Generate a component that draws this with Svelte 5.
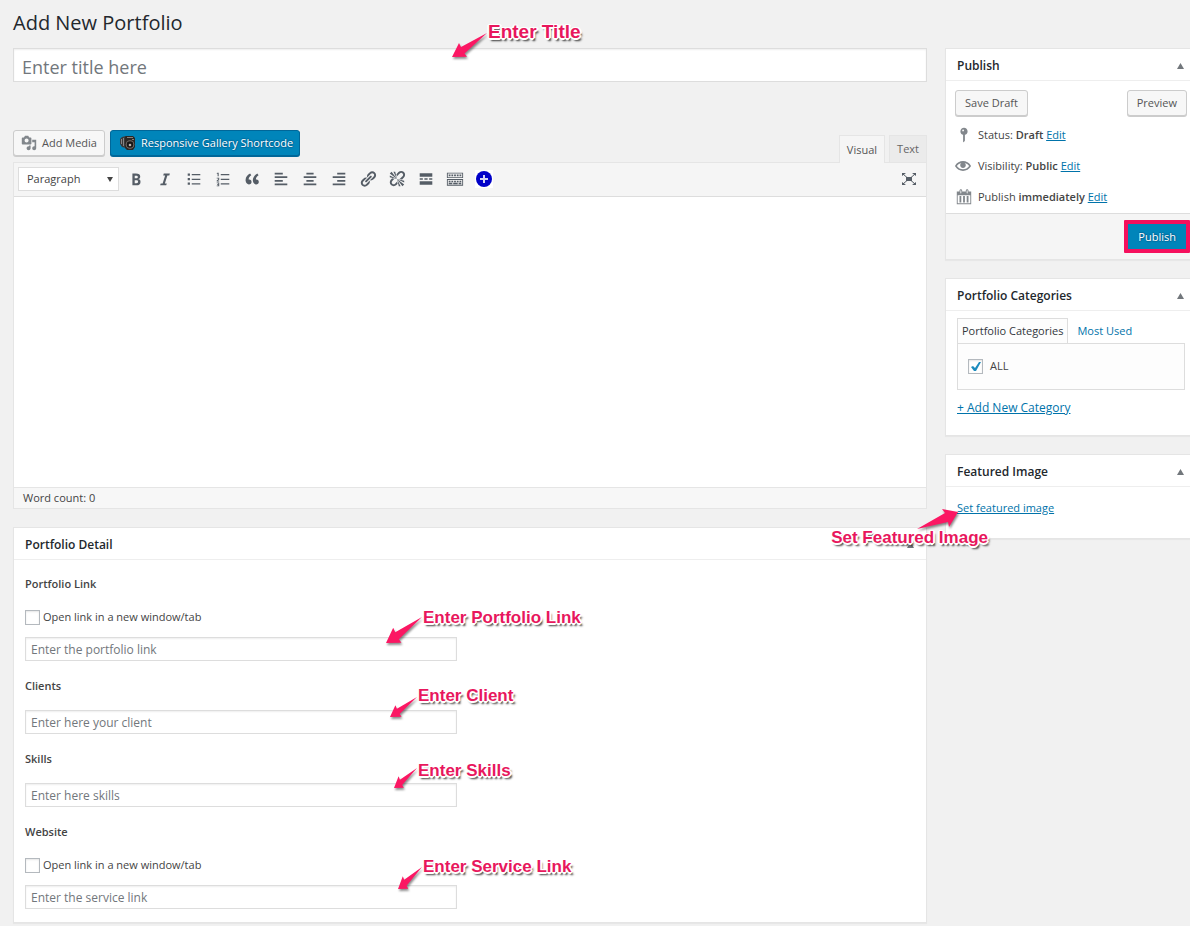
<script>
  const paragraphFormats = ['Paragraph', 'Heading 1', 'Heading 2', 'Preformatted'];

  const tools = [
    { name: 'Bold', path: 'M6 4v13h4.54c1.37 0 2.46-.33 3.26-1 .8-.66 1.2-1.58 1.2-2.77 0-.84-.17-1.51-.51-2.01s-.9-.85-1.67-1.03v-.09c.57-.1 1.02-.4 1.36-.9s.51-1.13.51-1.91c0-1.14-.39-1.98-1.17-2.5C12.75 4.26 11.5 4 9.78 4H6zm2.57 5.15V6.26h1.36c.73 0 1.27.11 1.61.32.34.22.51.58.51 1.07 0 .54-.16.92-.47 1.15s-.82.35-1.51.35h-1.5zm0 2.19h1.6c1.44 0 2.16.53 2.16 1.61 0 .6-.17 1.05-.51 1.34s-.86.43-1.57.43H8.57v-3.38z' },
    { name: 'Italic', path: 'M14.78 6h-2.13l-2.8 9h2.12l-.62 2H4.6l.62-2h2.14l2.8-9H8.03l.62-2h6.75z' },
    { name: 'Bulleted list', path: 'M3 4h2.500v2.500H3zM7.500 4.500H17v1.400H7.500zM3 9h2.500v2.500H3zM7.500 9.600H17V11H7.500zM3 14h2.500v2.500H3zM7.500 14.600H17V16H7.500z' },
    { name: 'Numbered list', path: 'M4 3h1.200v4H4V4.200h-.9v-.8zM7.500 4.500H17v1.300H7.500zM3 8.500h2.800v2.300L4.300 12h1.500v.9H3v-1.100l1.700-1.400v-1H3zM7.500 9.700H17V11H7.500zM3 14h2.800v4H3v-.9h1.700v-.8H3.400v-.8h1.300v-.7H3zM7.500 14.700H17V16H7.500z' },
    { name: 'Blockquote', path: 'M9.49 13.22c0-.74-.2-1.38-.61-1.9-.62-.78-1.83-.88-2.53-.72-.29-1.65 1.11-3.75 2.92-4.65L7.88 4c-2.73 1.3-5.42 4.28-4.96 8.05C3.21 14.43 4.59 16 6.54 16c.85 0 1.56-.25 2.12-.75s.83-1.18.83-2.03zm8.05 0c0-.74-.2-1.38-.61-1.9-.63-.78-1.83-.88-2.53-.72-.29-1.65 1.11-3.75 2.92-4.65L15.93 4c-2.73 1.3-5.41 4.28-4.95 8.05.29 2.38 1.66 3.95 3.61 3.95.85 0 1.56-.25 2.12-.75s.83-1.18.83-2.03z' },
    { name: 'Align left', path: 'M12 5V3H3v2h9zm5 4V7H3v2h14zm-5 4v-2H3v2h9zm5 4v-2H3v2h14z' },
    { name: 'Align center', path: 'M14 5V3H6v2h8zm3 4V7H3v2h14zm-3 4v-2H6v2h8zm3 4v-2H3v2h14z' },
    { name: 'Align right', path: 'M17 5V3H8v2h9zm0 4V7H3v2h14zm0 4v-2H8v2h9zm0 4v-2H3v2h14z' },
    { name: 'Insert link', path: 'M17.74 2.76c1.68 1.69 1.68 4.41 0 6.1l-1.53 1.52c-1.12 1.12-2.7 1.47-4.14 1.09l2.62-2.61.76-.77.76-.76c.84-.84.84-2.2 0-3.04-.84-.85-2.2-.85-3.04 0l-.77.76-3.38 3.38c-.37-1.44-.02-3.02 1.1-4.14l1.52-1.53c1.69-1.68 4.42-1.68 6.1 0zM8.59 13.43l5.34-5.34c.42-.42.42-1.1 0-1.52-.44-.43-1.13-.39-1.53 0l-5.33 5.34c-.42.42-.42 1.1 0 1.52.44.43 1.13.39 1.52 0zm-.76 2.29l4.14-4.15c.38 1.44.03 3.02-1.09 4.14l-1.52 1.53c-1.69 1.68-4.41 1.68-6.1 0-1.68-1.68-1.68-4.42 0-6.1l1.53-1.52c1.12-1.12 2.7-1.47 4.14-1.1l-4.14 4.15c-.85.84-.85 2.2 0 3.05.84.84 2.2.84 3.04 0z' },
    { name: 'Remove link', path: 'M17.74 2.26c1.68 1.69 1.68 4.41 0 6.1l-1.53 1.52c-.32.33-.69.58-1.08.77L13 10l1.690-1.640.760-.770.760-.760c.840-.840.840-2.200 0-3.040-.840-.850-2.200-.850-3.040 0l-.770.760-.760.760L10 7l-.650-2.140c.190-.380.440-.750.770-1.070l1.520-1.530c1.690-1.680 4.420-1.680 6.100 0zM2 4l8 6-6-8zm4-2l4 8-2-8H6zM2 6l8 4-8-2V6zm7.360 7.690L10 13l.740 2.350-1.380 1.390c-1.690 1.680-4.410 1.680-6.100 0-1.680-1.680-1.680-4.420 0-6.100l1.390-1.380L7 10l-.690.640-1.520 1.530c-.850.840-.850 2.200 0 3.040.840.850 2.200.850 3.040 0zM18 16l-8-6 6 8zm-4 2l-4-8 2 8h2zm4-4l-8-4 8 2v2z' },
    { name: 'Insert Read More tag', path: 'M3 3.500h14v4H3zM3 9.200h3.500v1.600H3zM8.200 9.200h3.600v1.600H8.200zM13.500 9.200H17v1.600h-3.500zM3 12.500h14v4H3z' },
    { name: 'Toolbar toggle', path: 'M1 3h18v6H1zm1 1v4h16V4zM1 10h18v7.500H1zm1 1v5.500h16V11zM3 5h2v2H3zM6 5h2v2H6zM9 5h2v2H9zM12 5h2v2h-2zM15 5h2v2h-2zM3 12h2v1.500H3zM6 12h2v1.500H6zM9 12h2v1.500H9zM12 12h2v1.500h-2zM15 12h2v1.500h-2zM3 14.300h4v1.500H3zM8 14.300h5v1.500H8zM14 14.300h3v1.500h-3z' }
  ];

  const mediaPath = 'M13 11V4c0-.55-.45-1-1-1h-1.67L9 1H5L3.67 3H2c-.55 0-1 .45-1 1v7c0 .55.45 1 1 1h10c.55 0 1-.45 1-1zM7 4.5c1.38 0 2.5 1.12 2.5 2.5S8.38 9.5 7 9.5 4.5 8.38 4.5 7 5.62 4.5 7 4.5zM14 6h5v10.5c0 1.38-1.12 2.5-2.5 2.5S14 17.88 14 16.5s1.12-2.5 2.5-2.5c.17 0 .34.02.5.05V9h-3V6zm-4 8.05V13h2v3.5c0 1.38-1.12 2.5-2.5 2.5S7 17.88 7 16.5 8.12 14 9.5 14c.17 0 .34.02.5.05z';

  const publishRows = [
    { label: 'Status:', value: 'Draft', size: 18, path: 'M14 6c0 1.86-1.28 3.41-3 3.86V16c0 1-2 2-2 2V9.86c-1.72-.45-3-2-3-3.86 0-2.21 1.79-4 4-4s4 1.79 4 4zM8 5c0 .55.45 1 1 1s1-.45 1-1-.45-1-1-1-1 .45-1 1z' },
    { label: 'Visibility:', value: 'Public', size: 16, path: 'M19.7 9.4C17.7 6 14 3.9 10 3.9S2.3 6 .3 9.4L0 10l.3.6c2 3.4 5.7 5.5 9.7 5.5s7.700-2.100 9.700-5.500l.3-.6-.3-.6zM10 14.1c-3.1 0-6-1.6-7.700-4.1C3.600 8 5.700 6.600 8 6.100c-.9.6-1.500 1.700-1.500 2.900 0 1.900 1.600 3.500 3.500 3.500s3.500-1.600 3.500-3.500c0-1.200-.6-2.300-1.500-2.900 2.300.5 4.400 1.900 5.700 3.900-1.700 2.500-4.600 4.100-7.700 4.100z' },
    { label: 'Publish', value: 'immediately', size: 18, path: 'M15 4h3v14H2V4h3V3c0-.83.67-1.5 1.500-1.500S8 2.170 8 3v1h4V3c0-.83.67-1.500 1.500-1.500S15 2.170 15 3v1zM6 3v2.500c0 .28.22.5.5.5s.5-.22.5-.5V3c0-.28-.22-.5-.5-.5S6 2.720 6 3zm7 0v2.500c0 .28.22.5.5.5s.5-.22.5-.5V3c0-.28-.22-.5-.5-.5s-.5.22-.5.5zm4 14V8H3v9h14zM7 16V9H5v7h2zm4 0V9H9v7h2zm4 0V9h-2v7h2z' }
  ];

  // Callout positions are measured from the top left corner of the field they point at.
  const fields = [
    { id: 'portfolio-link', title: 'Portfolio Link', hint: 'Enter the portfolio link', newTab: true,
      note: { text: 'Enter Portfolio Link', x: 361, y: -20, w: 36, h: 26, gap: 1, lift: 9 } },
    { id: 'clients', title: 'Clients', hint: 'Enter here your client', newTab: false,
      note: { text: 'Enter Client', x: 365, y: -13, w: 27, h: 20, gap: 1, lift: 11 } },
    { id: 'skills', title: 'Skills', hint: 'Enter here skills', newTab: false,
      note: { text: 'Enter Skills', x: 369, y: -15, w: 23, h: 20, gap: 1, lift: 7 } },
    { id: 'website', title: 'Website', hint: 'Enter the service link', newTab: true,
      note: { text: 'Enter Service Link', x: 373, y: -18, w: 24, h: 22, gap: 1, lift: 10 } }
  ];

  let category = $state(true);
</script>

{#snippet icon(path, size)}
  <svg class="icon" width={size} height={size} viewBox="0 0 20 20" aria-hidden="true"><path d={path} fill-rule="evenodd" /></svg>
{/snippet}

{#snippet callout(note)}
  <span class="callout" class:large={note.large} style="left: {note.x}px; top: {note.y}px; gap: {note.gap}px">
    <svg width={note.w} height={note.h} viewBox="0 0 35 24" preserveAspectRatio="none" aria-hidden="true">
      <path d="M0 24 7 10l2 4L35 0 12.500 20.500l2.500 3.200z" />
    </svg>
    <span class="callout-text" style="margin-top: -{note.lift}px">{note.text}</span>
  </span>
{/snippet}

{#snippet boxHead(title)}
  <header class="box-head">
    <h2>{title}</h2>
    <button class="toggle" type="button" aria-label="Toggle panel: {title}">
      <svg width="7" height="6" viewBox="0 0 7 6" aria-hidden="true"><path d="M3.500 0 7 6H0z" /></svg>
    </button>
  </header>
{/snippet}

<div class="page">
  <h1>Add New Portfolio</h1>

  <div class="columns">
    <main>
      <div class="title-field">
        <input type="text" placeholder="Enter title here" aria-label="Title" />
        {@render callout({ text: 'Enter Title', x: 439, y: -15, w: 35, h: 24, gap: 1, lift: 11, large: true })}
      </div>

      <div class="editor-tools">
        <div class="media">
          <button class="btn add-media" type="button">{@render icon(mediaPath, 16)}Add Media</button>
          <button class="btn primary shortcode" type="button">
            <svg width="16" height="16" viewBox="0 0 16 16" aria-hidden="true">
              <path d="M0 4 2 2l4-1v12l-4-1-2-3z" fill="#3a3a3a" />
              <path d="M1.500 4v5M3.500 3v8" stroke="#858585" />
              <path d="M6 1h7l2 2v9l-2 3H7l-2-2V2z" fill="#2b2724" />
              <path d="M7 2.500h6M12 4.500h2" stroke="#8b8179" />
              <circle cx="10" cy="9.500" r="4.300" fill="#77706a" />
              <circle cx="10" cy="9.500" r="3.300" fill="#171514" />
              <circle cx="10" cy="10" r="1.300" fill="#bcb3ad" />
            </svg>
            Responsive Gallery Shortcode
          </button>
        </div>
        <div class="modes">
          <button class="mode active" type="button">Visual</button>
          <button class="mode" type="button">Text</button>
        </div>
      </div>

      <section class="editor">
        <div class="toolbar">
          <div class="select">
            <select aria-label="Paragraph format">
              {#each paragraphFormats as format}<option>{format}</option>{/each}
            </select>
            <svg width="6" height="5" viewBox="0 0 6 5" aria-hidden="true"><path d="M0 0h6L3 5z" /></svg>
          </div>
          {#each tools as tool}
            <button class="tool" type="button" aria-label={tool.name}>{@render icon(tool.path, 18)}</button>
          {/each}
          <button class="tool" type="button" aria-label="Add shortcode">
            <svg width="18" height="18" viewBox="0 0 18 18" aria-hidden="true">
              <path d="M0 0h18v18H0z" fill="#fff" />
              <circle cx="9" cy="9" r="8" fill="#0000c8" />
              <path d="M9 5v8M5 9h8" stroke="#d4d4f4" stroke-width="2" />
            </svg>
          </button>
          <button class="tool expand" type="button" aria-label="Distraction-free writing mode">
            <svg width="16" height="14" viewBox="0 0 16 14" aria-hidden="true">
              <path d="M5 5h6v4H5zM1 1h4L1 4zM15 1h-4l4 3zM1 13h4l-4-3zM15 13h-4l4-3z" />
              <path d="m2 2 4 3.500M14 2l-4 3.500M2 12l4-3.500M14 12l-4-3.500" stroke="#555d66" />
            </svg>
          </button>
        </div>
        <textarea aria-label="Content"></textarea>
        <div class="status">Word count: 0</div>
      </section>

      <section class="box detail">
        {@render boxHead('Portfolio Detail')}
        <div class="fields">
          {#each fields as field}
            <div class="field">
              <label class="name" for={field.id}>{field.title}</label>
              {#if field.newTab}
                <label class="check"><input type="checkbox" />Open link in a new window/tab</label>
              {/if}
              <div class="entry">
                <input id={field.id} type="text" placeholder={field.hint} />
                {@render callout(field.note)}
              </div>
            </div>
          {/each}
        </div>
      </section>
    </main>

    <aside>
      <section class="box">
        {@render boxHead('Publish')}
        <div class="publish">
          <div class="draft-actions">
            <button class="btn" type="button">Save Draft</button>
            <button class="btn" type="button">Preview</button>
          </div>
          <ul>
            {#each publishRows as row}
              <li>
                <span class="row-icon">{@render icon(row.path, row.size)}</span>
                <span>{row.label} <b>{row.value}</b> <a href="#edit">Edit</a></span>
              </li>
            {/each}
          </ul>
        </div>
        <footer><button class="btn primary publish-btn" type="button">Publish</button></footer>
      </section>

      <section class="box">
        {@render boxHead('Portfolio Categories')}
        <div class="categories">
          <div class="cat-tabs">
            <button class="active" type="button">Portfolio Categories</button>
            <button type="button">Most Used</button>
          </div>
          <div class="cat-panel">
            <label class="check"><input type="checkbox" bind:checked={category} />ALL</label>
          </div>
          <a class="add-category" href="#new-category">+ Add New Category</a>
        </div>
      </section>

      <section class="box">
        {@render boxHead('Featured Image')}
        <div class="featured">
          <a href="#featured">Set featured image</a>
          <span class="callout featured-note">
            <svg width="41" height="21" viewBox="0 0 41 21" aria-hidden="true">
              <path d="M41 3 25 0l3 4L0 20l31-7 1 5z" />
            </svg>
            <span class="callout-text">Set Featured Image</span>
          </span>
        </div>
      </section>
    </aside>
  </div>
</div>

<style>
  :global(body) {
    margin: 0;
    background: #f1f1f1;
  }

  .page {
    padding: 0 0 4px 13px;
    overflow: hidden;
    color: #444;
    font: 11px/18px "Open Sans", "Noto Sans", sans-serif;
  }

  .page * {
    box-sizing: border-box;
  }

  button,
  input,
  select,
  textarea {
    margin: 0;
    font: inherit;
    color: inherit;
  }

  button {
    cursor: pointer;
  }

  svg {
    display: block;
    flex: none;
  }

  .icon {
    fill: currentColor;
  }

  a {
    color: #0073aa;
  }

  h1 {
    margin: 0;
    padding: 9px 0 11px;
    color: #23282d;
    font-size: 20px;
    font-weight: 400;
    line-height: 28px;
  }

  .columns {
    display: grid;
    grid-template-columns: minmax(0, 1fr) 245px;
    gap: 18px;
    align-items: start;
  }

  input::placeholder {
    color: #72777c;
    opacity: 1;
  }

  input[type='text'] {
    display: block;
    width: 100%;
    border: 1px solid #ddd;
    border-radius: 0;
    background: #fff;
    box-shadow: inset 0 1px 2px rgba(0, 0, 0, 0.07);
  }

  .title-field,
  .entry,
  .featured {
    position: relative;
  }

  .title-field input {
    height: 34px;
    padding: 3px 8px 0;
    font-size: 18px;
  }

  /* Editor */
  .editor-tools {
    display: flex;
    justify-content: space-between;
    align-items: flex-end;
    margin-top: 48px;
  }

  .media {
    display: flex;
    gap: 5px;
    padding-bottom: 6px;
  }

  .btn {
    display: flex;
    align-items: center;
    justify-content: center;
    height: 26px;
    padding: 0 9px;
    border: 1px solid #ccc;
    border-radius: 3px;
    background: #f7f7f7;
    box-shadow: 0 1px 0 #ccc;
    color: #555;
    white-space: nowrap;
  }

  .add-media {
    gap: 5px;
    padding: 0 7px;
  }

  .add-media .icon {
    color: #82878c;
  }

  .primary {
    border-color: #006799;
    background: #0085ba;
    box-shadow: 0 1px 0 #006799;
    color: #fff;
    text-shadow: 0 -1px 1px #006799, 1px 0 1px #006799, 0 1px 1px #006799;
  }

  .shortcode {
    gap: 5px;
    padding: 0 6px 0 9px;
  }

  .modes {
    display: flex;
    gap: 4px;
  }

  .mode {
    height: 27px;
    padding: 0 7px;
    border: 1px solid #e5e5e5;
    border-bottom: 0;
    background: #ebebeb;
    color: #666;
  }

  .mode.active {
    margin-bottom: -1px;
    height: 28px;
    background: #f5f5f5;
    color: #555;
    z-index: 1;
  }

  .editor {
    border: 1px solid #e5e5e5;
    background: #fff;
  }

  .toolbar {
    display: flex;
    align-items: center;
    height: 34px;
    padding: 0 3px 1px 4px;
    border-bottom: 1px solid #ddd;
    background: #f5f5f5;
    color: #555d66;
  }

  .select {
    display: flex;
    align-items: center;
    width: 101px;
    height: 24px;
    margin-right: 2px;
    padding-right: 5px;
    border: 1px solid #ddd;
    background: #fff;
    fill: #444;
  }

  select {
    flex: 1;
    min-width: 0;
    height: 22px;
    padding: 0 0 0 8px;
    border: 0;
    background: none;
    color: #444;
    appearance: none;
  }

  .tool {
    display: grid;
    place-items: center;
    width: 29px;
    height: 28px;
    padding: 0;
    border: 0;
    background: none;
  }

  .expand {
    margin-left: auto;
    fill: currentColor;
  }

  textarea {
    display: block;
    width: 100%;
    height: 290px;
    padding: 10px;
    border: 0;
    resize: none;
  }

  .status {
    height: 21px;
    padding: 0 9px;
    border-top: 1px solid #e5e5e5;
    background: #f7f7f7;
    line-height: 20px;
  }

  /* Boxes */
  .box {
    border: 1px solid #e5e5e5;
    background: #fff;
    box-shadow: 0 1px 1px rgba(0, 0, 0, 0.04);
  }

  aside .box {
    margin-bottom: 18px;
    border-right: 0;
  }

  .detail {
    margin-top: 18px;
  }

  .box-head {
    display: flex;
    align-items: center;
    justify-content: space-between;
    height: 32px;
    padding: 2px 6px 0 11px;
    border-bottom: 1px solid #eee;
  }

  .detail .box-head {
    padding-right: 12px;
  }

  h2 {
    margin: 0;
    color: #23282d;
    font-size: 12px;
    font-weight: 600;
    line-height: 18px;
  }

  .toggle {
    padding: 0;
    border: 0;
    background: none;
    fill: #72777c;
  }

  .fields {
    display: grid;
    gap: 16px;
    padding: 15px 11px 13px;
  }

  .name {
    display: block;
    margin-bottom: 15px;
    font-weight: 600;
  }

  .check {
    display: flex;
    align-items: center;
    gap: 3px;
    width: fit-content;
  }

  .field .check {
    margin-bottom: 11px;
  }

  input[type='checkbox'] {
    width: 15px;
    height: 15px;
    border: 1px solid #b4b9be;
    background: #fff center / 13px 13px no-repeat;
    box-shadow: inset 0 1px 2px rgba(0, 0, 0, 0.1);
    appearance: none;
  }

  input[type='checkbox']:checked {
    background-image: url("data:image/svg+xml,%3Csvg xmlns='http://www.w3.org/2000/svg' viewBox='0 0 13 13'%3E%3Cpath d='M2 7l2-1 2 2 4-6 2 0-5 9H5z' fill='%231e8cbe'/%3E%3C/svg%3E");
  }

  .entry {
    width: 432px;
    max-width: 100%;
  }

  .entry input {
    height: 24px;
    padding: 1px 5px 0;
    font-size: 12px;
  }

  /* Publish */
  .publish {
    padding: 9px 3px 7px 9px;
  }

  .draft-actions {
    display: flex;
    justify-content: space-between;
  }

  ul {
    display: grid;
    gap: 13px;
    margin: 10px 0 0;
    padding: 0;
    list-style: none;
  }

  li {
    display: flex;
    align-items: center;
    height: 18px;
  }

  .row-icon {
    display: grid;
    place-items: center;
    width: 16px;
    margin-right: 7px;
    color: #82878c;
  }

  b {
    font-weight: 600;
  }

  footer {
    display: flex;
    justify-content: flex-end;
    padding: 6px 0;
    border-top: 1px solid #ddd;
    background: #f5f5f5;
  }

  .publish-btn {
    height: 33px;
    padding: 0 10px;
    border: 4px solid #f5105d;
    border-radius: 1px;
    box-shadow: none;
  }

  /* Categories */
  .categories {
    padding: 7px 5px 18px 11px;
  }

  .cat-tabs {
    display: flex;
  }

  .cat-tabs button {
    height: 25px;
    padding: 0 9px;
    border: 0;
    background: none;
    color: #0073aa;
  }

  .cat-tabs .active {
    margin-bottom: -1px;
    padding: 0 4px;
    border: 1px solid #ddd;
    border-bottom: 0;
    background: #fdfdfd;
    color: #32373c;
    z-index: 1;
  }

  .cat-panel {
    margin-bottom: 9px;
    padding: 13px 10px 14px;
    border: 1px solid #ddd;
    background: #fdfdfd;
  }

  .cat-panel .check {
    gap: 7px;
  }

  .add-category {
    font-size: 12px;
  }

  .featured {
    padding: 12px 11px 21px;
  }

  /* Callouts */
  .callout {
    position: absolute;
    z-index: 2;
    display: flex;
    align-items: flex-start;
    color: #e8175d;
    font: bold 17px/20px "Liberation Sans", Arial, sans-serif;
    white-space: nowrap;
    pointer-events: none;
  }

  .callout.large {
    font-size: 19px;
  }

  .callout svg {
    fill: #fb1763;
    filter: drop-shadow(1px 2px 1px rgba(0, 0, 0, 0.45));
    overflow: visible;
  }

  .callout-text {
    text-shadow: -1px -1px 0 #fff, 1px -1px 0 #fff, -1px 1px 0 #fff, 1px 1px 0 #fff, 2px 0 0 #fff, -2px 0 0 #fff,
      0 2px 0 #fff, 2px 3px 2px rgba(0, 0, 0, 0.8);
  }

  .featured-note {
    right: 202px;
    top: 22px;
    flex-direction: column;
    align-items: center;
  }

  .featured-note svg {
    margin-left: 56px;
  }

  .featured-note .callout-text {
    margin-top: -2px;
  }
</style>
